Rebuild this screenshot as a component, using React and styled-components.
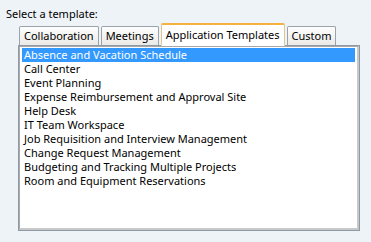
import React, { useState } from 'react'
import styled, { createGlobalStyle } from 'styled-components'

const GlobalStyle = createGlobalStyle`
  body {
    margin: 0;
    background: #eef3f8;
    font-family: "Noto Sans", "Open Sans", sans-serif;
    font-size: 11px;
    color: #000;
  }
`

const Page = styled.div`
  width: 371px;
  height: 242px;
  padding: 7px 0 0 6px;
  box-sizing: border-box;
`

const Label = styled.div`
  line-height: 14px;
  height: 15px;
`

const Picker = styled.div`
  margin-left: 12px;
  width: 342px;
`

const TabBar = styled.div`
  display: flex;
  align-items: flex-end;
  gap: 2px;
  height: 23px;
  padding-left: 1px;
  position: relative;
  z-index: 1;
`

const Tab = styled.div`
  box-sizing: border-box;
  padding: 0 4px 0 4px;
  line-height: 16px;
  height: ${p => (p.$active ? '23px' : '19px')};
  border: 1px solid ${p => (p.$active ? '#e2c48e' : '#9aa3ab')};
  border-top: ${p => (p.$active ? '2px solid #f5b240' : '1px solid #9aa3ab')};
  border-bottom: ${p => (p.$active ? '1px solid #fff' : 'none')};
  margin-bottom: ${p => (p.$active ? '-1px' : '0')};
  padding-top: ${p => (p.$active ? '2px' : '1px')};
  background: ${p => (p.$active ? '#fff' : 'linear-gradient(#fdfdfd, #ebeae7)')};
  border-radius: 2px 2px 0 0;
  white-space: nowrap;
  cursor: default;
`

const Panel = styled.div`
  box-sizing: border-box;
  height: 186px;
  border: 1px solid #8f9aa4;
  background: #fff;
`

const List = styled.ul`
  box-sizing: border-box;
  height: 100%;
  margin: 0;
  padding: 1px 2px;
  list-style: none;
  border-left: 1px solid #a8a8a8;
  border-top: 1px solid #a8a8a8;
  border-right: 2px solid #c8c8c8;
  border-bottom: 2px solid #c8c8c8;
`

const Item = styled.li`
  height: 14px;
  line-height: 14px;
  padding-left: 2px;
  white-space: nowrap;
  background: ${p => (p.$selected ? '#3399ff' : 'transparent')};
  color: ${p => (p.$selected ? '#fff' : '#000')};
`

const tabs = ['Collaboration', 'Meetings', 'Application Templates', 'Custom']
const templates = [
  'Absence and Vacation Schedule',
  'Call Center',
  'Event Planning',
  'Expense Reimbursement and Approval Site',
  'Help Desk',
  'IT Team Workspace',
  'Job Requisition and Interview Management',
  'Change Request Management',
  'Budgeting and Tracking Multiple Projects',
  'Room and Equipment Reservations',
]

export default function App() {
  const [tab, setTab] = useState(2)
  const [selected, setSelected] = useState(0)
  return (
    <>
      <GlobalStyle />
      <Page>
        <Label>Select a template:</Label>
        <Picker>
          <TabBar>
            {tabs.map((t, i) => (
              <Tab key={t} $active={i === tab} onClick={() => setTab(i)}>
                {t}
              </Tab>
            ))}
          </TabBar>
          <Panel>
            <List>
              {templates.map((t, i) => (
                <Item key={t} $selected={i === selected} onClick={() => setSelected(i)}>
                  {t}
                </Item>
              ))}
            </List>
          </Panel>
        </Picker>
      </Page>
    </>
  )
}
